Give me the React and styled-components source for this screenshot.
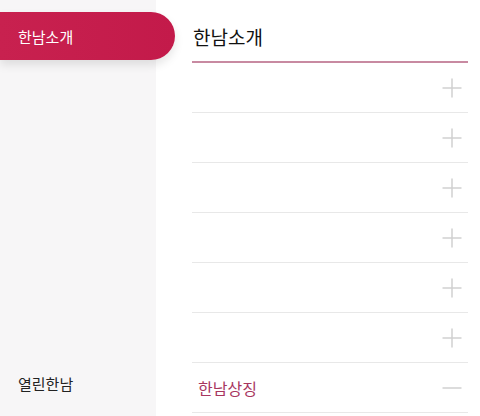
import React from "react";
import styled, { createGlobalStyle } from "styled-components";

const Global = createGlobalStyle`
  html, body { margin: 0; padding: 0; background: #fff; }
  body { font-family: "Noto Sans CJK KR", "Noto Sans", sans-serif; }
  * { box-sizing: border-box; }
`;

const Page = styled.div`
  display: flex;
  width: 480px;
  height: 416px;
  overflow: hidden;
  background: #fff;
`;

const Sidebar = styled.nav`
  width: 156px;
  flex-shrink: 0;
  background: #f7f6f7;
  display: flex;
  flex-direction: column;
  padding: 12px 0 22px;
  position: relative;
  z-index: 1;
`;

const ActiveItem = styled.div`
  width: 175px;
  height: 48px;
  border-radius: 0 24px 24px 0;
  background: linear-gradient(90deg, #c8214f 0%, #c31a4a 100%);
  box-shadow: 0 5px 10px rgba(0, 0, 0, 0.1);
  color: #fff;
  font-size: 15px;
  display: flex;
  align-items: center;
  padding-left: 18px;
`;

const SideItem = styled.div`
  margin-top: auto;
  padding-left: 18px;
  font-size: 15px;
  color: #222;
  line-height: 20px;
`;

const Content = styled.main`
  flex: 1;
  padding: 0 12px 0 36px;
`;

const Title = styled.h1`
  margin: 0;
  height: 63px;
  padding: 24px 0 0 1px;
  font-size: 19px;
  font-weight: 400;
  color: #111;
  line-height: 26px;
  border-bottom: 2px solid #c88aa1;
`;

const Row = styled.div`
  height: 50px;
  border-bottom: 1px solid #e8e8e8;
  display: flex;
  align-items: center;
  justify-content: space-between;
  padding: 0 6px 0 6px;
  font-size: 16px;
  color: ${(p) => (p.$open ? "#a8365f" : "#333")};
`;

const Icon = styled.svg`
  width: 20px;
  height: 20px;
  flex-shrink: 0;
`;

function Toggle({ open }) {
  return (
    <Icon viewBox="0 0 20 20">
      <line x1="0.5" y1="10" x2="19.5" y2="10" stroke="#d0d0d0" strokeWidth="1.5" />
      {!open && <line x1="10" y1="0.5" x2="10" y2="19.5" stroke="#d0d0d0" strokeWidth="1.5" />}
    </Icon>
  );
}

const rows = ["", "", "", "", "", ""];

export default function App() {
  return (
    <>
      <Global />
      <Page>
        <Sidebar>
          <ActiveItem>한남소개</ActiveItem>
          <SideItem>열린한남</SideItem>
        </Sidebar>
        <Content>
          <Title>한남소개</Title>
          {rows.map((r, i) => (
            <Row key={i}>
              <span>{r}</span>
              <Toggle />
            </Row>
          ))}
          <Row $open>
            <span>한남상징</span>
            <Toggle open />
          </Row>
        </Content>
      </Page>
    </>
  );
}
